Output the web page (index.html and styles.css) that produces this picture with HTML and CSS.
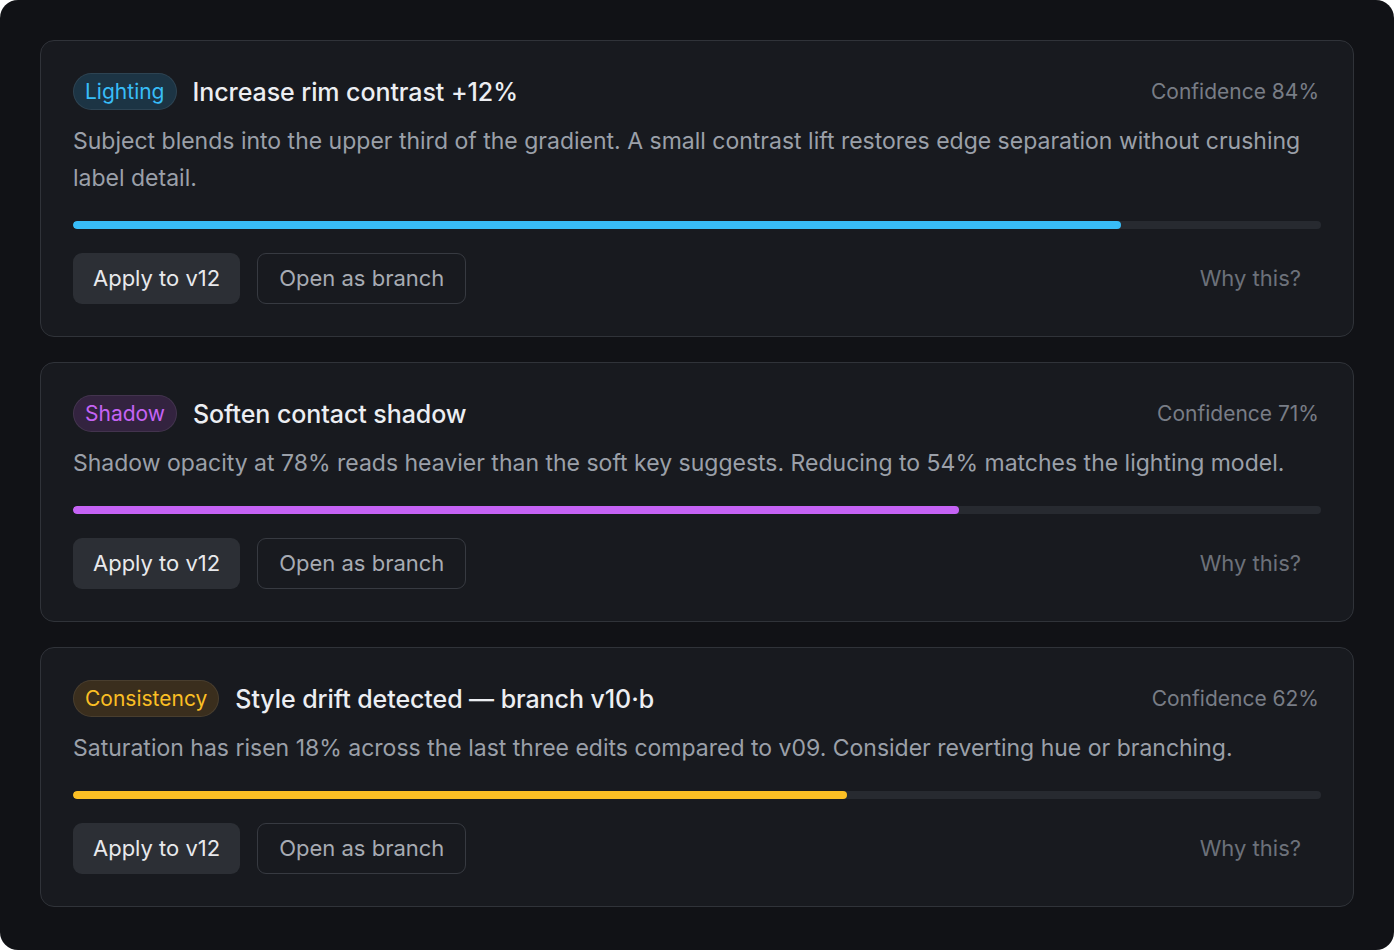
FILE: index.html
```html
<!DOCTYPE html>
<html lang="en">
<head>
<meta charset="utf-8">
<title>Suggestions</title>
<link rel="stylesheet" href="styles.css">
</head>
<body>
<div class="panel">
  <div class="card">
    <div class="head">
      <span class="tag tag-light">Lighting</span>
      <span class="title">Increase rim contrast +12%</span>
      <span class="conf">Confidence 84%</span>
    </div>
    <p class="desc">Subject blends into the upper third of the gradient. A small contrast lift restores edge separation without crushing label detail.</p>
    <div class="track"><div class="fill fill-light" style="width:84%"></div></div>
    <div class="actions">
      <button class="btn btn-apply">Apply to v12</button>
      <button class="btn btn-branch">Open as branch</button>
      <button class="btn btn-why">Why this?</button>
    </div>
  </div>
  <div class="card">
    <div class="head">
      <span class="tag tag-shadow">Shadow</span>
      <span class="title">Soften contact shadow</span>
      <span class="conf">Confidence 71%</span>
    </div>
    <p class="desc">Shadow opacity at 78% reads heavier than the soft key suggests. Reducing to 54% matches the lighting model.</p>
    <div class="track"><div class="fill fill-shadow" style="width:71%"></div></div>
    <div class="actions">
      <button class="btn btn-apply">Apply to v12</button>
      <button class="btn btn-branch">Open as branch</button>
      <button class="btn btn-why">Why this?</button>
    </div>
  </div>
  <div class="card">
    <div class="head">
      <span class="tag tag-cons">Consistency</span>
      <span class="title">Style drift detected — branch v10·b</span>
      <span class="conf">Confidence 62%</span>
    </div>
    <p class="desc">Saturation has risen 18% across the last three edits compared to v09. Consider reverting hue or branching.</p>
    <div class="track"><div class="fill fill-cons" style="width:62%"></div></div>
    <div class="actions">
      <button class="btn btn-apply">Apply to v12</button>
      <button class="btn btn-branch">Open as branch</button>
      <button class="btn btn-why">Why this?</button>
    </div>
  </div>
</div>
</body>
</html>
```
FILE: styles.css
```css
* { box-sizing: border-box; }
html, body { margin: 0; padding: 0; background: #ffffff; }
body { font-family: Inter, "Noto Sans", sans-serif; }
.panel {
  width: 1394px;
  height: 950px;
  background: #111216;
  border-radius: 18px;
  padding: 40px;
  display: flex;
  flex-direction: column;
  gap: 25px;
}
.card {
  background: #181a1f;
  border: 1px solid #303339;
  border-radius: 14px;
  padding: 32px;
  display: flex;
  flex-direction: column;
}
.head {
  display: flex;
  align-items: center;
  gap: 16px;
  min-height: 37px;
}
.tag {
  font-size: 21px;
  line-height: 27px;
  padding: 4px 11px;
  border-radius: 999px;
  border: 1px solid rgba(255,255,255,0.08);
}
.tag-light { background: #1c3444; color: #38bdf8; }
.tag-shadow { background: #33233f; color: #c563f5; }
.tag-cons { background: #3a2e1d; color: #fbbf24; }
.title {
  font-size: 25px;
  font-weight: 500;
  color: #eceef2;
  letter-spacing: -0.003em;
}
.conf {
  margin-left: auto;
  margin-right: 2px;
  font-size: 21px;
  color: #787d86;
}
.desc {
  margin: 13px 0 0;
  font-size: 23px;
  line-height: 37px;
  color: #9ba0a9;
}
.track {
  margin-top: 24px;
  height: 8px;
  border-radius: 4px;
  background: #272a30;
  overflow: hidden;
}
.fill { height: 100%; border-radius: 4px; }
.fill-light { background: #38bdf8; }
.fill-shadow { background: #c563f5; }
.fill-cons { background: #fbbf24; }
.actions {
  margin-top: 24px;
  display: flex;
  align-items: center;
  gap: 17px;
}
.btn {
  font-family: inherit;
  font-size: 22px;
  line-height: 27px;
  padding: 11px 19px;
  border-radius: 9px;
  border: 1px solid transparent;
  background: transparent;
}
.btn-apply { background: #2c2f35; color: #e8e9ec; }
.btn-branch { border-color: #373a41; color: #a7abb3; padding: 11px 21px; }
.btn-why { margin-left: auto; color: #6c717a; }
```
